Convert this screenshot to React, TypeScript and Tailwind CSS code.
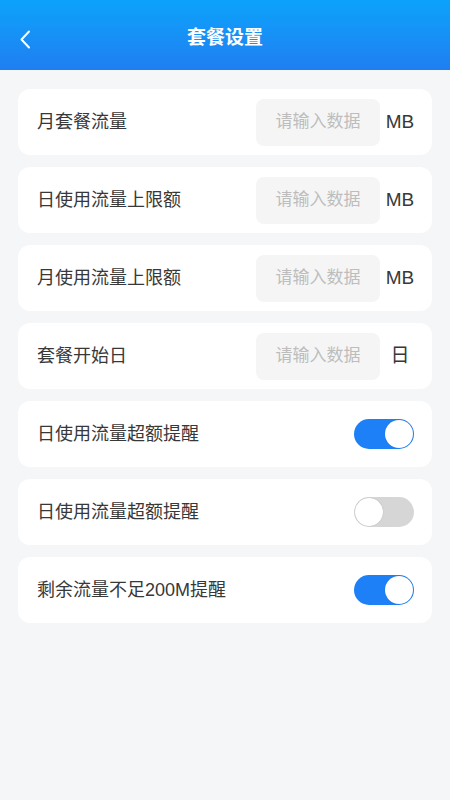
import { useState } from 'react';

const inputRows = [
  { label: '月套餐流量', unit: 'MB' },
  { label: '日使用流量上限额', unit: 'MB' },
  { label: '月使用流量上限额', unit: 'MB' },
  { label: '套餐开始日', unit: '日' },
];

const switchRows = [
  { label: '日使用流量超额提醒', on: true },
  { label: '日使用流量超额提醒', on: false },
  { label: '剩余流量不足200M提醒', on: true },
];

function Toggle({ on, onClick }: { on: boolean; onClick: () => void }) {
  return (
    <button
      onClick={onClick}
      className={`w-[60px] h-[30px] rounded-full p-[1px] flex items-center ${
        on ? 'bg-[#1e80f6] justify-end' : 'bg-[#d6d6d6] justify-start'
      }`}
    >
      <span className="w-[28px] h-[28px] rounded-full bg-white shadow-[0_0_1px_rgba(0,0,0,0.25)]" />
    </button>
  );
}

export default function App() {
  const [toggles, setToggles] = useState(switchRows.map((r) => r.on));

  return (
    <div
      className="min-h-[800px] bg-[#f5f6f8]"
      style={{ fontFamily: '"Liberation Sans", "Noto Sans CJK SC", sans-serif' }}
    >
      {/* Header */}
      <div className="h-[70px] bg-gradient-to-b from-[#0aa3fb] to-[#1f7ef1] flex items-center relative pt-[6px]">
        <button className="absolute left-[14px] top-[25px] w-[22px] h-[28px] flex items-center justify-center">
          <svg width="12" height="19" viewBox="0 0 12 19" fill="none">
            <path d="M10 1.5L2.5 9.5L10 17.5" stroke="white" strokeWidth="2" strokeLinecap="round" strokeLinejoin="round" />
          </svg>
        </button>
        <h1 className="flex-1 text-center text-white text-[19px] font-bold">套餐设置</h1>
      </div>

      {/* Rows */}
      <div className="px-[18px] pt-[19px] flex flex-col gap-[12px]">
        {inputRows.map((row, i) => (
          <div key={i} className="bg-white rounded-[12px] h-[66px] flex items-center pl-[19px] pr-[12px]">
            <span className="flex-1 text-[18px] text-[#383838]">{row.label}</span>
            <div className="w-[124px] h-[47px] rounded-[8px] bg-[#f5f5f5] flex items-center justify-center text-[17px] text-[#bdbdbd]">
              请输入数据
            </div>
            <span className="w-[40px] text-center text-[19px] text-[#383838]">{row.unit}</span>
          </div>
        ))}

        {switchRows.map((row, i) => (
          <div key={i} className="bg-white rounded-[12px] h-[66px] flex items-center pl-[19px] pr-[18px]">
            <span className="flex-1 text-[18px] text-[#383838]">{row.label}</span>
            <Toggle
              on={toggles[i]}
              onClick={() => setToggles((t) => t.map((v, j) => (j === i ? !v : v)))}
            />
          </div>
        ))}
      </div>
    </div>
  );
}
